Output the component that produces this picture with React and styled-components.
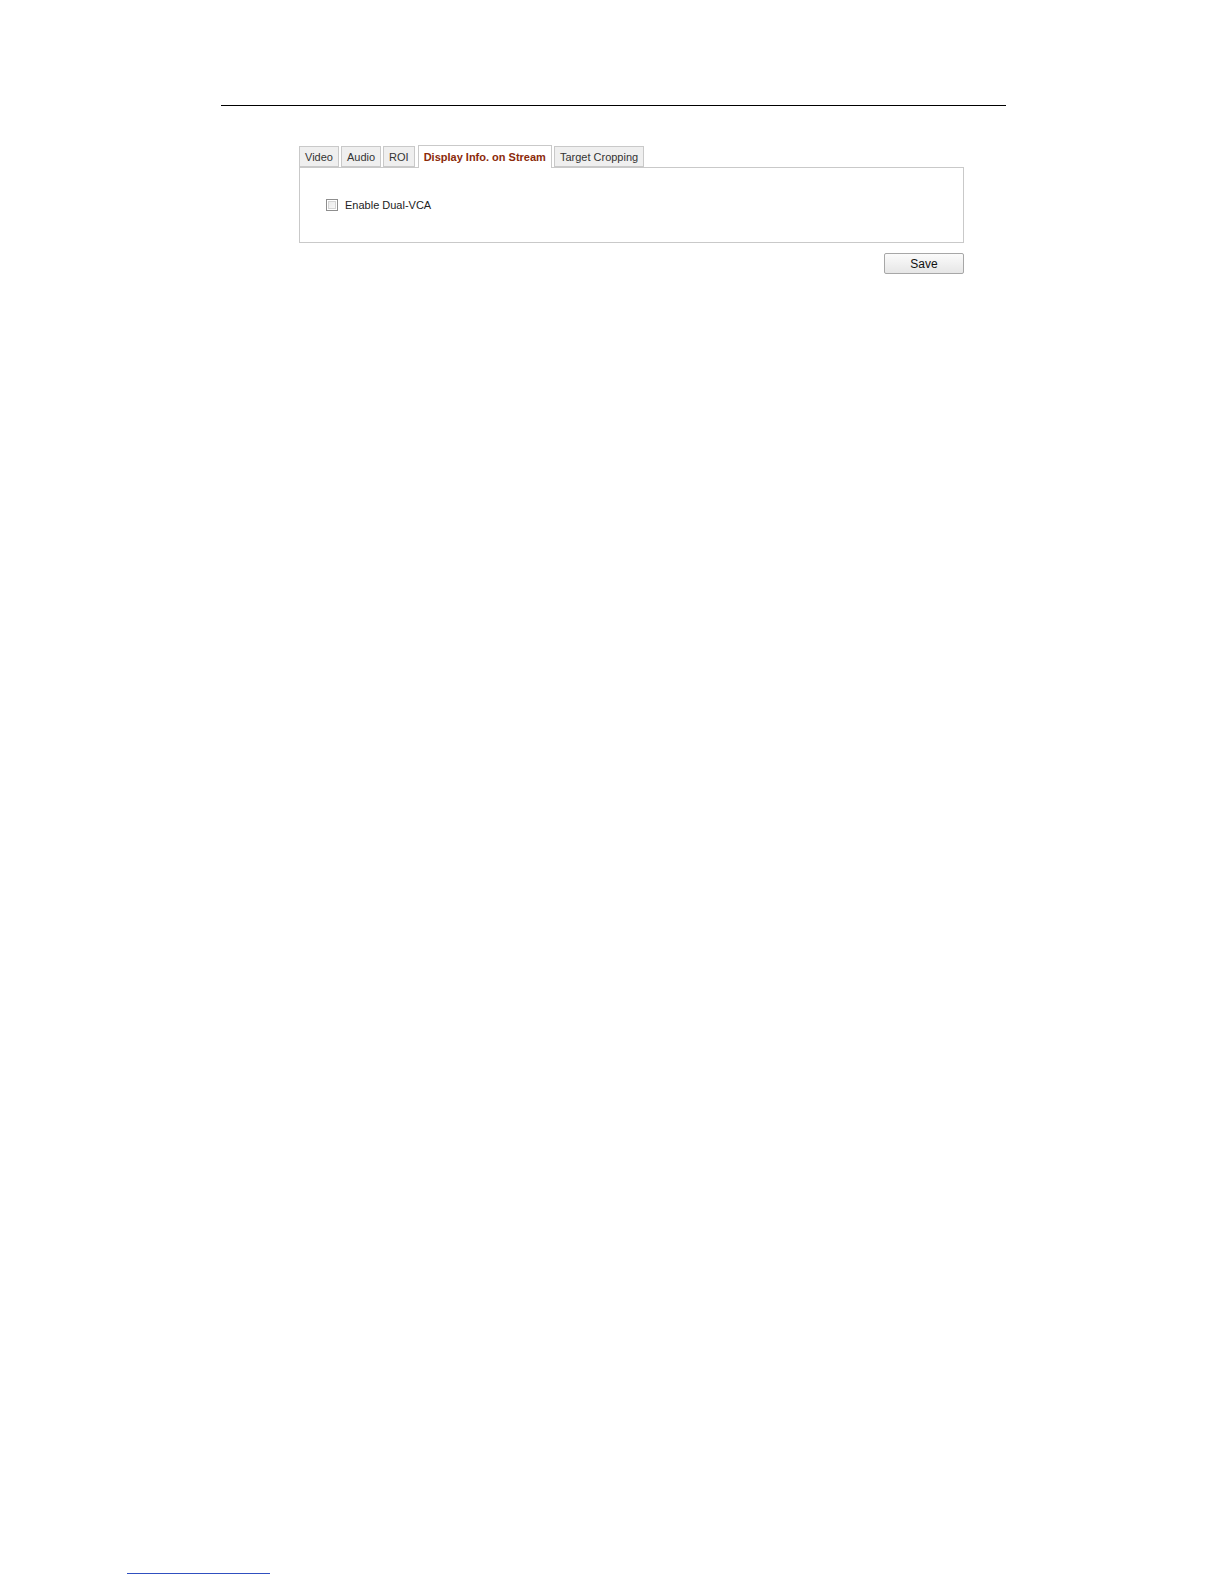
import React, { useState } from 'react';
import styled, { createGlobalStyle } from 'styled-components';

const GlobalStyle = createGlobalStyle`
  html, body {
    margin: 0;
    padding: 0;
    background: #fff;
    overflow: hidden;
  }
  body {
    font-family: "Liberation Sans", Arial, sans-serif;
  }
`;

const tabs = ['Video', 'Audio', 'ROI', 'Display Info. on Stream', 'Target Cropping'];

const App = () => {
  const [active, setActive] = useState(3);
  const [dual, setDual] = useState(false);

  return (
    <Page>
      <GlobalStyle />
      <HeaderRule />
      <Content>
        <TabBar>
          {tabs.map((t, i) => (
            <Tab key={t} active={i === active} onClick={() => setActive(i)}>
              {t}
            </Tab>
          ))}
        </TabBar>
        <Panel>
          <CheckRow>
            <Check type="checkbox" checked={dual} onChange={e => setDual(e.target.checked)} />
            <span>Enable Dual-VCA</span>
          </CheckRow>
        </Panel>
        <Actions>
          <SaveButton>Save</SaveButton>
        </Actions>
      </Content>
      <Spacer />
      <FootRule />
    </Page>
  );
};

const Page = styled.div`
  height: 1584px;
  display: flex;
  flex-direction: column;
  overflow: hidden;
`;

const HeaderRule = styled.div`
  margin: 105px 0 0 221px;
  width: 785px;
  height: 1px;
  background: #000;
`;

const Content = styled.div`
  width: 665px;
  margin: 39px 0 0 299px;
`;

const TabBar = styled.div`
  display: flex;
  gap: 2px;
  align-items: flex-end;
  height: 22px;
`;

const Tab = styled.div`
  height: ${p => (p.active ? '23px' : '21px')};
  box-sizing: border-box;
  padding: 0 5px;
  display: flex;
  align-items: center;
  font-size: 11px;
  font-weight: ${p => (p.active ? 'bold' : 'normal')};
  color: ${p => (p.active ? '#8b2a0a' : '#333')};
  background: ${p => (p.active ? '#fff' : '#efefef')};
  border: 1px solid #c9c9c9;
  border-bottom: ${p => (p.active ? 'none' : '1px solid #c9c9c9')};
  margin-bottom: ${p => (p.active ? '-1px' : '0')};
  position: relative;
  cursor: pointer;
  &:nth-child(4) {
    margin-left: 1px;
  }
`;

const Panel = styled.div`
  height: 76px;
  box-sizing: border-box;
  border: 1px solid #c9c9c9;
  padding: 31px 0 0 26px;
`;

const CheckRow = styled.label`
  display: flex;
  align-items: center;
  gap: 7px;
  font-size: 11px;
  color: #222;
`;

const Check = styled.input`
  appearance: none;
  margin: 0;
  width: 12px;
  height: 12px;
  box-sizing: border-box;
  border: 1px solid #8e8e8e;
  background: #fff;
  box-shadow: inset 0 0 0 1px #fff, inset 0 0 0 2px #d4d4d4;
  background-image: linear-gradient(135deg, #e8e8e8, #fafafa);
  &:checked::after {
    content: '';
    display: block;
    width: 3px;
    height: 6px;
    margin: 0 0 0 3px;
    border: solid #333;
    border-width: 0 1.5px 1.5px 0;
    transform: rotate(45deg);
  }
`;

const Actions = styled.div`
  display: flex;
  justify-content: flex-end;
  margin-top: 10px;
`;

const SaveButton = styled.button`
  width: 80px;
  height: 21px;
  font-family: "Liberation Sans", Arial, sans-serif;
  font-size: 12px;
  color: #111;
  background: linear-gradient(#fbfbfb, #e6e6e6);
  border: 1px solid #a7a7a7;
  border-radius: 2px;
  padding: 0;
`;

const Spacer = styled.div`
  flex: 1;
`;

const FootRule = styled.div`
  margin: 0 0 10px 127px;
  width: 143px;
  height: 1px;
  background: #3050c0;
`;

export default App;
